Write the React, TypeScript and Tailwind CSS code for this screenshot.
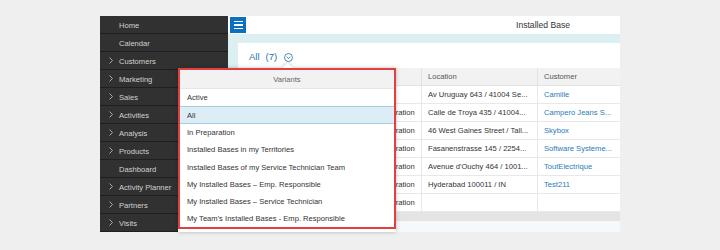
import React from "react";

const menu = [
  { label: "Home", arrow: false },
  { label: "Calendar", arrow: false },
  { label: "Customers", arrow: true },
  { label: "Marketing", arrow: true },
  { label: "Sales", arrow: true },
  { label: "Activities", arrow: true },
  { label: "Analysis", arrow: true },
  { label: "Products", arrow: true },
  { label: "Dashboard", arrow: false },
  { label: "Activity Planner", arrow: true },
  { label: "Partners", arrow: true },
  { label: "Visits", arrow: true },
];

const rows = [
  { status: "", location: "Av Uruguay 643 / 41004 Se...", customer: "Camille" },
  { status: "In Preparation", location: "Calle de Troya 435 / 41004...", customer: "Campero Jeans S..." },
  { status: "In Preparation", location: "46 West Gaines Street / Tall...", customer: "Skybox" },
  { status: "In Preparation", location: "Fasanenstrasse 145 / 2254...", customer: "Software Systeme..." },
  { status: "In Preparation", location: "Avenue d'Ouchy 464 / 1001...", customer: "ToutElectrique" },
  { status: "In Preparation", location: "Hyderabad 100011 / IN", customer: "Test211" },
  { status: "In Preparation", location: "", customer: "" },
];

const variants = [
  "Active",
  "All",
  "In Preparation",
  "Installed Bases in my Territories",
  "Installed Bases of my Service Technician Team",
  "My Installed Bases – Emp. Responsible",
  "My Installed Bases – Service Technician",
  "My Team's Installed Bases - Emp. Responsible",
];

const Chevron = () => (
  <svg width="4" height="7" viewBox="0 0 4 7" fill="none">
    <path d="M0.5 0.5 L3.5 3.5 L0.5 6.5" stroke="#b8b8b8" strokeWidth="0.9" />
  </svg>
);

export default function App() {
  return (
    <div className="relative w-[720px] h-[250px] overflow-hidden bg-[#efefef] font-['Liberation_Sans',Arial,sans-serif] text-[7.6px] leading-none">
      <div className="flex pt-[16px] pl-[100px]">
        {/* side menu */}
        <nav className="w-[128px] bg-[#313131]">
          {menu.map((m) => (
            <div
              key={m.label}
              className="h-[18px] flex items-center border-b border-[#1f1f1f] text-[#d2d2d2]"
            >
              <span className="w-[19px] pl-[9px] flex items-center">
                {m.arrow ? <Chevron /> : null}
              </span>
              <span className="pt-[2px]">{m.label}</span>
            </div>
          ))}
        </nav>

        {/* main */}
        <main className="w-[392px] h-[216px] flex flex-col bg-[#dcf0f1]">
          <header className="h-[18px] bg-white flex items-center">
            <button className="ml-[2px] w-[16px] h-[16px] bg-[#0b70be] flex flex-col items-center justify-center gap-[2px]">
              <span className="w-[9px] h-[1.5px] bg-white" />
              <span className="w-[9px] h-[1.5px] bg-white" />
              <span className="w-[9px] h-[1.5px] bg-white" />
            </button>
            <span className="ml-auto mr-[50px] pt-[1px] text-[8.6px] text-[#333]">Installed Base</span>
          </header>

          <section className="ml-[10px] mt-[9px] flex-1 bg-white flex flex-col">
            <div className="h-[25px] flex items-center pl-[11px] pt-[3px] text-[9.5px] text-[#1f72b6]">
              <span>All</span>
              <span className="ml-[6px]">(7)</span>
              <svg className="ml-[7px]" width="9" height="9" viewBox="0 0 9 9" fill="none">
                <circle cx="4.5" cy="4.5" r="4" stroke="#1f72b6" strokeWidth="0.8" />
                <path d="M2.6 3.7 L4.5 5.5 L6.4 3.7" stroke="#1f72b6" strokeWidth="0.8" />
              </svg>
            </div>

            <div className="grid grid-cols-[62px_60px_61px_116px_1fr] text-[#333]">
              {["ID", "Description", "Status", "Location", "Customer"].map((h, i) => (
                <div
                  key={h}
                  className={`h-[18px] flex items-center pl-[6px] pt-[1px] bg-[#f2f2f2] border-b border-[#e3e3e3] text-[#555] ${i > 0 ? "border-l" : ""}`}
                >
                  {h}
                </div>
              ))}
              {rows.map((r, idx) => (
                <React.Fragment key={idx}>
                  <div className="h-[18px] border-b border-[#e8e8e8]" />
                  <div className="h-[18px] border-b border-l border-[#e8e8e8]" />
                  <div className="h-[18px] flex items-center pl-[6px] pt-[1px] border-b border-l border-[#e8e8e8]">
                    {r.status}
                  </div>
                  <div className="h-[18px] flex items-center pl-[6px] pt-[1px] border-b border-l border-[#e8e8e8] whitespace-nowrap overflow-hidden">
                    {r.location}
                  </div>
                  <div className="h-[18px] flex items-center pl-[6px] pt-[1px] border-b border-l border-[#e8e8e8] whitespace-nowrap overflow-hidden text-[#2a7bb8]">
                    {r.customer}
                  </div>
                </React.Fragment>
              ))}
            </div>
            <div className="h-[9px] bg-[#e4e4e4]" />
            <div className="flex-1 bg-[#f5f9fb]" />
          </section>
        </main>
      </div>

      {/* variants popover */}
      <div className="absolute left-[178px] top-[68px] w-[218px] h-[164px] bg-white shadow-[0_0_4px_rgba(0,0,0,0.25)]">
        <div className="absolute left-[106px] top-[-4px] w-[7px] h-[7px] rotate-45 bg-white shadow-[-1px_-1px_2px_rgba(0,0,0,0.15)]" />
        <div className="relative border-2 border-[#e0403f] bg-white">
          <div className="h-[19px] flex items-center justify-center pt-[1px] bg-[#f2f2f2] border-b border-[#e6e6e6] text-[#666]">
            Variants
          </div>
          {variants.map((v) => (
            <div
              key={v}
              className={`h-[17.3px] flex items-center pl-[7px] pt-[1px] text-[#333] ${
                v === "All" ? "bg-[#ddedf6] border-y border-[#a8cde2]" : ""
              }`}
            >
              {v}
            </div>
          ))}
        </div>
      </div>
    </div>
  );
}
